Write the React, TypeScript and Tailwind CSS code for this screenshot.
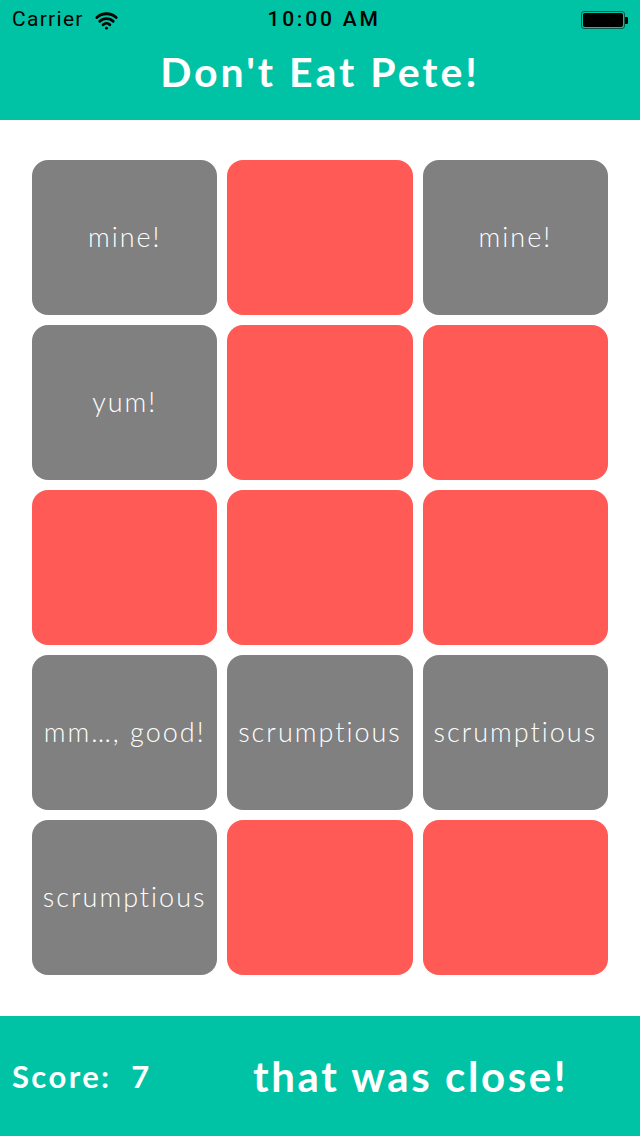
import { Wifi } from 'lucide-react';

type Tile = { label?: string };

const tiles: Tile[] = [
  { label: 'mine!' }, {}, { label: 'mine!' },
  { label: 'yum!' }, {}, {},
  {}, {}, {},
  { label: 'mm…, good!' }, { label: 'scrumptious' }, { label: 'scrumptious' },
  { label: 'scrumptious' }, {}, {},
];

function StatusBar() {
  return (
    <div className="relative h-10 flex items-center px-3 text-black font-['Roboto',sans-serif]">
      <div className="flex items-center gap-[11px]">
        <span className="text-[21px] tracking-[1.3px]">Carrier</span>
        <Wifi size={23} strokeWidth={3} />
      </div>
      <span className="absolute left-0 right-0 pl-[8px] text-center text-[21px] font-medium tracking-[2.8px] pointer-events-none">
        10:00 AM
      </span>
      <div className="ml-auto flex items-center">
        <div className="w-[44px] h-[18px] rounded-[3px] border border-[#0a5a4c] p-[1px]">
          <div className="w-full h-full rounded-[2px] bg-black" />
        </div>
        <div className="w-[3px] h-[7px] bg-black rounded-r-[1px]" />
      </div>
    </div>
  );
}

export default function App() {
  return (
    <div className="w-[640px] h-[1136px] bg-white flex flex-col font-['Lato',sans-serif]">
      <header className="h-[120px] bg-[#00c3a5] flex flex-col">
        <StatusBar />
        <h1 className="flex-1 flex items-center justify-center pb-4 text-white text-[41px] font-bold tracking-[3px]">
          Don't Eat Pete!
        </h1>
      </header>

      <main className="flex-1 px-8 pt-10">
        <div className="grid grid-cols-3 gap-x-[10px] gap-y-[10px] auto-rows-[155px]">
          {tiles.map((t, i) => (
            <div
              key={i}
              className={`rounded-[16px] flex items-center justify-center overflow-hidden whitespace-nowrap text-white text-[27px] font-light tracking-[2px] ${
                t.label ? 'bg-[#808080]' : 'bg-[#ff5a55]'
              }`}
            >
              {t.label}
            </div>
          ))}
        </div>
      </main>

      <footer className="h-[120px] bg-[#00c3a5] flex items-center text-white font-bold">
        <span className="w-[253px] pl-3 text-[31px] tracking-[2.4px]">Score:&nbsp; 7</span>
        <span className="text-[42px] tracking-[2.6px]">that was close!</span>
      </footer>
    </div>
  );
}
